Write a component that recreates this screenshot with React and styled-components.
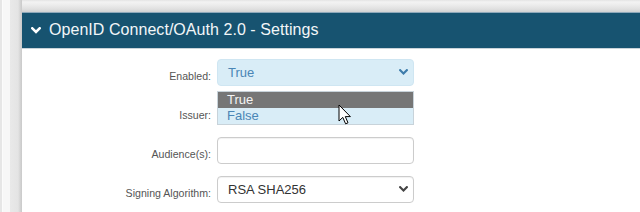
import React from "react";
import styled, { createGlobalStyle } from "styled-components";

const Global = createGlobalStyle`
  html, body { margin: 0; padding: 0; background: #ffffff; }
  body { font-family: "Liberation Sans", Arial, sans-serif; }
  * { box-sizing: border-box; }
`;

const Page = styled.div`
  display: flex;
  width: 640px;
  height: 212px;
  overflow: hidden;
`;

const Gutter = styled.div`
  width: 10px;
  flex: none;
  background: #f7f7f7;
  border-left: 2px solid #e6e6e6;
  box-shadow: inset 1px 0 0 #fbfbfb;
`;

const SideStrip = styled.div`
  width: 12px;
  flex: none;
  background: linear-gradient(to right, #e9e9e9 0, #e4e4e4 8px, #d6d6d6 10px, #c9c9c9 12px);
`;

const Main = styled.div`
  flex: 1;
  display: flex;
  flex-direction: column;
  background: #ffffff;
`;

const TopPanel = styled.div`
  height: 12px;
  flex: none;
  background: linear-gradient(
    to bottom,
    #e4e4e4 0px,
    #f3f3f3 2px,
    #ececec 5px,
    #e0e0e0 9px,
    #d2d2d2 12px
  );
`;

const Header = styled.div`
  height: 37px;
  flex: none;
  display: flex;
  align-items: center;
  gap: 8px;
  padding-left: 9px;
  padding-bottom: 1px;
  background: #175370;
  border-top: 1px solid #8fa9ba;
  border-bottom: 1px solid #c9d3da;
  color: #f2f6f8;
  font-size: 16px;
  letter-spacing: 0.05px;
`;

const Body = styled.div`
  display: flex;
  flex-direction: column;
  gap: 12px;
  padding-top: 10px;
`;

const Row = styled.div`
  display: flex;
  align-items: flex-start;
`;

const Label = styled.div`
  width: 189px;
  margin-right: 6px;
  padding-top: 11px;
  text-align: right;
  font-size: 10.6px;
  line-height: 13px;
  color: #555555;
`;

const Control = styled.div`
  position: relative;
  width: 197px;
  height: 27px;
  flex: none;
`;

const Field = styled.div`
  width: 100%;
  height: 100%;
  display: flex;
  align-items: center;
  justify-content: space-between;
  padding: 0 5px 1px 10px;
  border-radius: 4px;
  border: 1px solid ${(p) => (p.$info ? "#cfe6f2" : "#cccccc")};
  background: ${(p) => (p.$info ? "#d9edf7" : "#ffffff")};
  color: ${(p) => (p.$info ? "#4a86b6" : "#333333")};
  font-size: 13px;
  box-shadow: ${(p) => (p.$info ? "none" : "inset 0 1px 1px rgba(0,0,0,0.06)")};
`;

const List = styled.div`
  position: absolute;
  left: 0;
  top: 32px;
  width: 197px;
  height: 34px;
  border: 1px solid #c8d3da;
  background: #d9edf7;
  z-index: 5;
`;

const Option = styled.div`
  height: 16px;
  line-height: 16px;
  padding-left: 9px;
  font-size: 13px;
  background: ${(p) => (p.$active ? "#767676" : "transparent")};
  color: ${(p) => (p.$active ? "#f4f4f4" : "#4a86b6")};
`;

const Cursor = styled.svg`
  position: absolute;
  left: 120px;
  top: 12px;
  z-index: 6;
`;

const Chevron = ({ color, size = 9, stroke = 2.4 }) => (
  <svg width={size} height={size * 0.7} viewBox="0 0 10 7" fill="none">
    <path d="M1.3 1.3 L5 5 L8.7 1.3" stroke={color} strokeWidth={stroke} strokeLinecap="square" />
  </svg>
);

export default function App() {
  return (
    <>
      <Global />
      <Page>
        <Gutter />
        <SideStrip />
        <Main>
          <TopPanel />
          <Header>
            <Chevron color="#ffffff" size={10} stroke={2.6} />
            <span>OpenID Connect/OAuth 2.0 - Settings</span>
          </Header>
          <Body>
            <Row>
              <Label>Enabled:</Label>
              <Control>
                <Field $info>
                  <span>True</span>
                  <Chevron color="#3d7cab" />
                </Field>
                <List>
                  <Option $active>True</Option>
                  <Option>False</Option>
                  <Cursor width="14" height="22" viewBox="0 0 14 22">
                    <path
                      d="M1 1 L1 17 L4.8 13.4 L7.6 19.8 L10 18.8 L7.3 12.6 L12.4 12.6 Z"
                      fill="#ffffff"
                      stroke="#000000"
                      strokeWidth="1"
                      strokeLinejoin="round"
                    />
                  </Cursor>
                </List>
              </Control>
            </Row>
            <Row>
              <Label>Issuer:</Label>
              <Control>
                <Field />
              </Control>
            </Row>
            <Row>
              <Label>Audience(s):</Label>
              <Control>
                <Field />
              </Control>
            </Row>
            <Row>
              <Label>Signing Algorithm:</Label>
              <Control>
                <Field>
                  <span>RSA SHA256</span>
                  <Chevron color="#444444" />
                </Field>
              </Control>
            </Row>
          </Body>
        </Main>
      </Page>
    </>
  );
}
